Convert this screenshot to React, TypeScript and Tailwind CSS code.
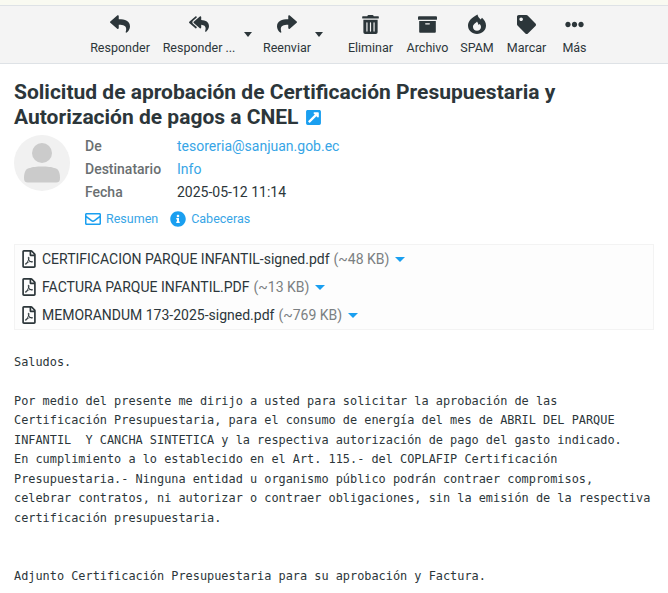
import React from 'react';
import {
  FaReply,
  FaReplyAll,
  FaShare,
  FaTrashAlt,
  FaArchive,
  FaTag,
  FaEllipsisH,
  FaRegFilePdf,
  FaRegEnvelope,
  FaInfoCircle,
  FaExternalLinkSquareAlt,
} from 'react-icons/fa';

const Caret = ({ className }: { className: string }) => (
  <span className={`border-x-[4.5px] border-t-[5px] border-x-transparent ${className}`} />
);

const ToolButton = ({ icon, label, className }: { icon: React.ReactNode; label: string; className: string }) => (
  <div className={`flex flex-col items-center shrink-0 ${className}`}>
    <div className="h-[24px] flex items-center justify-center text-[#2c363a]">{icon}</div>
    <div className="text-[12.5px] leading-[16px] mt-[4px] text-[#2c363a] whitespace-nowrap">{label}</div>
  </div>
);

// ring-shaped flame of the SPAM button
const SpamIcon = () => (
  <svg width="18" height="20" viewBox="0 0 18 20" fill="currentColor">
    <path
      fillRule="evenodd"
      d="M9.5 0.5 C10 3 11.5 4.4 12.7 5.4 L14 3.8 C16.4 6 18 8.6 18 11.5 C18 16.4 14 20 9 20 C4 20 0 16.4 0 11.5 C0 7.4 3.6 3.6 9.5 0.5Z M9 7.6 C8.4 8.9 5 10 5 13 C5 15.2 6.8 16.8 9 16.8 C11.2 16.8 13 15.2 13 13 C13 11.6 12.3 10.6 11.6 9.9 L10.6 10.9 C10.2 9.8 9.6 8.6 9 7.6Z"
    />
  </svg>
);

const attachments = [
  { name: 'CERTIFICACION PARQUE INFANTIL-signed.pdf', size: '(~48 KB)' },
  { name: 'FACTURA PARQUE INFANTIL.PDF', size: '(~13 KB)' },
  { name: 'MEMORANDUM 173-2025-signed.pdf', size: '(~769 KB)' },
];

const body = `Saludos.

Por medio del presente me dirijo a usted para solicitar la aprobación de las
Certificación Presupuestaria, para el consumo de energía del mes de ABRIL DEL PARQUE
INFANTIL  Y CANCHA SINTETICA y la respectiva autorización de pago del gasto indicado.
En cumplimiento a lo establecido en el Art. 115.- del COPLAFIP Certificación
Presupuestaria.- Ninguna entidad u organismo público podrán contraer compromisos,
celebrar contratos, ni autorizar o contraer obligaciones, sin la emisión de la respectiva
certificación presupuestaria.


Adjunto Certificación Presupuestaria para su aprobación y Factura.`;

export default function App() {
  return (
    <div className="h-[593px] w-[668px] overflow-hidden bg-white font-['Roboto',sans-serif] text-[#2c363a]">
      {/* top strip */}
      <div className="h-[5px] bg-[#f9faf1]" />

      {/* Toolbar */}
      <div className="h-[59px] bg-[#f4f4f4] border-y border-[#dee2e6] flex items-start pl-[90px] pt-[6px]">
        <ToolButton icon={<FaReply size={20} />} label="Responder" className="w-[60px]" />
        <ToolButton icon={<FaReplyAll size={20} />} label="Responder ..." className="w-[72px] ml-[13px]" />
        <Caret className="border-t-[#2c363a] mt-[20px] ml-[9px]" />
        <ToolButton icon={<FaShare size={20} />} label="Reenviar" className="w-[48px] ml-[11px]" />
        <Caret className="border-t-[#2c363a] mt-[20px] ml-[4px]" />
        <ToolButton icon={<FaTrashAlt size={19} />} label="Eliminar" className="w-[45px] ml-[25px]" />
        <ToolButton icon={<FaArchive size={19} />} label="Archivo" className="w-[43px] ml-[13px]" />
        <ToolButton icon={<SpamIcon />} label="SPAM" className="w-[34px] ml-[11px]" />
        <ToolButton icon={<FaTag size={19} />} label="Marcar" className="w-[39px] ml-[13px]" />
        <ToolButton icon={<FaEllipsisH size={19} />} label="Más" className="w-[25px] ml-[16px]" />
      </div>

      {/* Subject */}
      <h2 className="mx-[14px] mt-[16px] text-[21px] leading-[25px] font-bold text-[#2c363a]">
        Solicitud de aprobación de Certificación Presupuestaria y
        <br />
        Autorización de pagos a CNEL{' '}
        <FaExternalLinkSquareAlt className="inline-block ml-[1px] mb-[2px] text-[#1a9ff0]" size={17} />
      </h2>

      {/* Headers */}
      <div className="flex mx-[14px] mt-[5px]">
        <div className="w-[56px] h-[56px] rounded-full bg-[#f1f1f1] flex items-center justify-center shrink-0">
          <svg width="36" height="42" viewBox="0 0 36 42" className="text-[#cbcbcb]" fill="currentColor">
            <circle cx="18" cy="11" r="10" />
            <path d="M6 26 C2 26 0 30 0 36 C0 39 1 40.5 4 40.5 L32 40.5 C35 40.5 36 39 36 36 C36 30 34 26 30 26 C26 24 10 24 6 26Z" />
          </svg>
        </div>
        <div className="ml-[15px] text-[14px] leading-[23px]">
          <div className="grid grid-cols-[92px_auto]">
            <div className="font-medium text-[#6a6f71]">De</div>
            <div className="text-[#37a5e6]">tesoreria@sanjuan.gob.ec</div>
            <div className="font-medium text-[#6a6f71]">Destinatario</div>
            <div className="text-[#37a5e6]">Info</div>
            <div className="font-medium text-[#6a6f71]">Fecha</div>
            <div className="text-[#2c363a]">2025-05-12 11:14</div>
          </div>
          <div className="flex items-center mt-[6px] text-[12.5px] leading-[18px] text-[#37a5e6]">
            <FaRegEnvelope size={16} className="text-[#1a9ff0]" />
            <span className="ml-[5px]">Resumen</span>
            <FaInfoCircle size={16} className="ml-[12px] text-[#1a9ff0]" />
            <span className="ml-[5px]">Cabeceras</span>
          </div>
        </div>
      </div>

      {/* Attachments */}
      <div className="mx-[14px] mt-[16px] h-[86px] border border-[#f3f3f3] bg-[#fdfdfd] pl-[5px] w-[640px]">
        {attachments.map(a => (
          <div key={a.name} className="h-[28px] flex items-center text-[14px]">
            <FaRegFilePdf size={18} className="text-[#2c363a] shrink-0" />
            <span className="ml-[4px] text-[#2c363a]">{a.name}</span>
            <span className="ml-[4px] text-[#7b8082]">{a.size}</span>
            <span className="ml-[6px] border-x-[5px] border-t-[5px] border-x-transparent border-t-[#1a9ff0]" />
          </div>
        ))}
      </div>

      {/* Body */}
      <pre className="mx-[14px] mt-[23px] font-['DejaVu_Sans_Mono',monospace] text-[11.88px] leading-[19.45px] text-[#2c363a] whitespace-pre">
        {body}
      </pre>
    </div>
  );
}
